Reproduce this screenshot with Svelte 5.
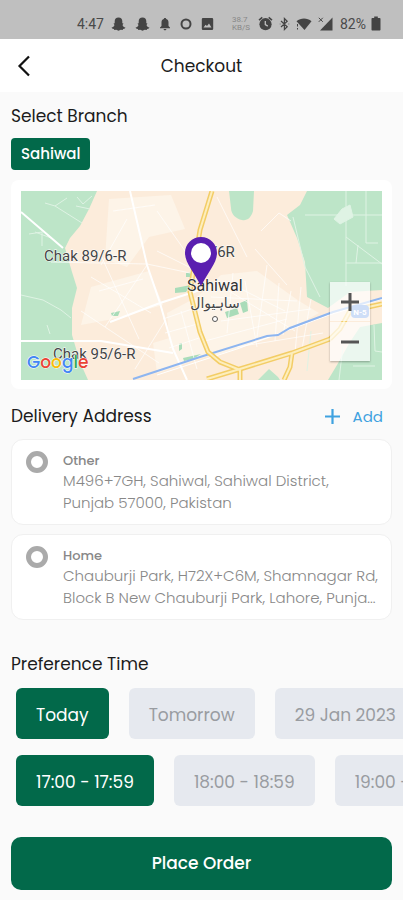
<script lang="ts">
  // Checkout screen: branch, delivery address and preferred time slot.
  interface Address {
    id: string;
    label: string;
    lines: string;
  }

  const addresses: Address[] = [
    {
      id: 'other',
      label: 'Other',
      lines: 'M496+7GH, Sahiwal, Sahiwal District,\nPunjab 57000, Pakistan',
    },
    {
      id: 'home',
      label: 'Home',
      lines: 'Chauburji Park, H72X+C6M, Shamnagar Rd,\nBlock B New Chauburji Park, Lahore, Punja...',
    },
  ];
  const days = ['Today', 'Tomorrow', '29 Jan 2023'];
  const slots = ['17:00 - 17:59', '18:00 - 18:59', '19:00 - 19:59'];

  let address = $state('');
  let day = $state(days[0]);
  let slot = $state(slots[0]);
</script>

<div class="screen">
  <div class="status">
    <span class="clock">4:47</span>
    <span class="icons notices">
      {#each [0, 1] as n (n)}
        <svg width="15" height="14" viewBox="0 0 15 14"><path d="M7.500 .5c2.500 0 3.800 1.700 3.800 3.800v2l1.200.1-1 1.500c.5 1.500 1.500 2.200 2.900 2.700l-.5 1-1.800.4-.4 1-2-.2-2.200 1-2.200-1-2 .2-.4-1-1.800-.4-.5-1c1.400-.5 2.400-1.200 2.900-2.700l-1-1.500 1.200-.1v-2C3.700 2.200 5 .5 7.500.5z" /></svg>
      {/each}
      <svg width="12" height="14" viewBox="0 0 12 14"><path d="M6 1c.8 0 1.200.5 1.200 1.100C8.900 2.700 9.500 4 9.500 5.500V9l1.500 1.500v.8H1v-.8L2.500 9V5.500C2.500 4 3.100 2.700 4.800 2.100 4.800 1.500 5.200 1 6 1zM4.600 12h2.800c0 .8-.6 1.300-1.400 1.300S4.600 12.800 4.600 12z" /></svg>
      <svg width="12" height="14" viewBox="0 0 12 14"><circle cx="6" cy="7" r="4.500" fill="none" stroke="#444" stroke-width="2" /></svg>
      <svg width="13" height="14" viewBox="0 0 13 14"><path fill-rule="evenodd" d="M2 1h9a1.200 1.200 0 0 1 1.200 1.200v9.600A1.200 1.200 0 0 1 11 13H2A1.200 1.200 0 0 1 .8 11.800V2.200A1.200 1.200 0 0 1 2 1zm.5 9.500h8L8 6.500l-2 2.600-1.400-1.400z" /></svg>
    </span>
    <span class="speed"><span>38.7</span><span>KB/S</span></span>
    <span class="icons signals">
      <svg width="15" height="15" viewBox="0 0 15 15"><path d="M.5 3.600 3.800.8l1 1.100-3.300 2.800zM14.500 3.600 11.200.8l-1 1.100 3.300 2.800z" /><circle cx="7.500" cy="8.200" r="6.100" /><path d="M7.300 5v3.600l2.500 1.500" fill="none" stroke="#bfbfbf" stroke-width="1.300" /></svg>
      <svg width="11" height="14" viewBox="0 0 11 14"><path d="m2 4 6.200 5.800L5.400 12.500v-11L8.200 4.200 2 10M.8 7h.6M9.500 7h.7" fill="none" stroke="#444" stroke-width="1.200" /></svg>
      <svg width="16" height="14" viewBox="0 0 16 14"><path d="M.5 4.200C4.800.6 11.200.6 15.500 4.200L8.500 13z" /><path d="M1.500 7v2.500M1.500 11v1.500" stroke="#444" stroke-width="1" /></svg>
      <svg width="15" height="14" viewBox="0 0 15 14"><path d="M14.500 .5V13.500H2z" /><path d="m.8.8 4 4m0-4-4 4" stroke="#444" stroke-width="1" /></svg>
    </span>
    <span class="clock">82%</span>
    <svg width="10" height="15" viewBox="0 0 10 15"><path d="M3.200 .5h3.600v1.500h1.700c.6 0 1 .4 1 1v10.500c0 .6-.4 1-1 1h-7c-.6 0-1-.4-1-1V3c0-.6.4-1 1-1h1.700z" /></svg>
  </div>

  <header class="bar">
    <button class="back" aria-label="Back">
      <svg width="14" height="22" viewBox="0 0 14 22"><path d="M12 1.500 2.500 11 12 20.500" fill="none" stroke="#111" stroke-width="2.200" /></svg>
    </button>
    <h1>Checkout</h1>
  </header>

  <main>
    <h2>Select Branch</h2>
    <button class="branch" aria-pressed="true">Sahiwal</button>

    <section class="map-card" aria-label="Branch location">
      <div class="map">
        <svg class="canvas" viewBox="0 0 361 189">
          <rect width="361" height="189" fill="#fcecdb" />
          <!-- built-up area -->
          <path d="M88 8l62-4 14 34-36 8-22 30-22-8zM70 96l58-16 14 34-50 14-32 6zM146 122l30-16 24-22 36-4 42 30 20 12-40 22-62 20-46 6zM132 152l46-14 18 24-60 20z" fill="#fdf4e8" />
          <g fill="#bde5c8">
            <path d="M0 0h76l-8 18-9 17-10 12-5 10 7 24 5 16-5 20v27l8 27 8 18H0z" />
            <path d="M286 0h75v99l-32 2-22 16-21-11-2-35-8-24-10-23 13-10z" />
            <path d="M361 132l-22 4-10 15-13 23-9 15h54z" />
            <path d="M208 0h25l-1 20c-2 7-6 10-11 9-6-1-11-6-11-12z" />
            <path d="M239 187l9-9 9 8 2 3h-22z" />
          </g>
          <g fill="#a9dcb9">
            <path d="M204 121l12-4 2 6-12 4zM219 112l7-3 1 11-5 2zM154 97l16-3-5 7-11 1zM165 82l10-1-3 5h-7zM90 122l9-2-2 5h-6zM158 153l3-1v6l-3 2zM162 167l18-4-8 5-9 2z" />
          </g>
          <g fill="none" stroke="#dff3e4" stroke-width="1">
            <path d="M24 12l10 3 27 17M34 15l12-8M0 104l22 5 18 10 10 8M8 43l13-2v14M26 134l3 9M56 6l6 7 9-8M55 15l14 3M14 41l16 6M284 24h77M325 0v95M325 46l36 27M325 72h36M335 72l2-18M345 0v52h12M272 26l12 50 15 30M353 134l1 26 7 1M322 155l-4 34M332 175h22M290 140l-4 40" />
            <path d="M313 28l8-10 8-4 3 12-13 7z" fill="#dff3e4" />
          </g>
          <g fill="none" stroke="#fff" stroke-width="1" stroke-opacity="0.7">
            <path d="M30 71l96 2 48 10M70 86l60 36M78 60l40 88M92 20l42-6M78 100l44-12M80 74l26-46M60 120l78 52M136 60l44 22M142 128l35-12M144 142l36-10M148 157l33-11M126 74l-42 62M196 6l30 60M204 90l60 30M212 82l-6 60M224 90l12 66M246 74l-10 72M258 92l-4 58M270 100l-8 44M190 106l86 4M184 150l82-22M208 100l66 40M240 40l18-18 12 8M234 58l32 36M136 20l28 40M114 178l30-48M160 120l16 58" />
            <path d="M200 130l90-12M216 156l86-14M280 96l-6 66M290 108l-9 50" />
          </g>
          <g fill="none" stroke="#fff" stroke-width="2">
            <path d="M0 21l42 36M109 0l17 74 13 38 13 46 14 31M0 102M0 150h80l72 12M89 131l50-19 40-13" />
          </g>
          <path d="M136 184l80-26 92-34 53-16" fill="none" stroke="#fff" stroke-width="1" />
          <path d="M112 188l67-22 67-21 11-1 12-7 43-16 49-14" fill="none" stroke="#8db5f0" stroke-width="2" />
          <g fill="none" stroke="#f3cd66" stroke-width="5">
            <path d="M191 0l-12 39-10 62 10 40 8 20 12 10 20 8v10M186 188l33-10 52-16 38-14M309 148l10-10 10-18 32-7M271 162l-2 14-6 13" />
          </g>
          <g fill="none" stroke="#fdeebd" stroke-width="2">
            <path d="M191 0l-12 39-10 62 10 40 8 20 12 10 20 8v10M186 188l33-10 52-16 38-14M309 148l10-10 10-18 32-7M271 162l-2 14-6 13" />
          </g>
          <rect x="330" y="114" width="18" height="13" rx="4" fill="#5b8fe4" />
          <text class="shield" x="339" y="124">N-5</text>
          <g class="place">
            <text x="23" y="70">Chak 89/6-R</text>
            <text x="32" y="168">Chak 95/6-R</text>
            <text x="190" y="66">/6R</text>
            <text x="166" y="100" class="town">Sahiwal</text>
            <text x="194" y="117" class="urdu">ساہیوال</text>
          </g>
          <circle cx="194" cy="128" r="2.500" fill="#fff" stroke="#555" stroke-width="1" />
          <path fill="#5a1fb0" d="M180 46c9 0 16 7 16 16 0 10-9 19-16 33-7-14-16-23-16-33 0-9 7-16 16-16z" />
          <circle cx="180" cy="62" r="10" fill="#fff" />
          <text class="google" x="6" y="177"><tspan fill="#4285f4">G</tspan><tspan fill="#ea4335">o</tspan><tspan fill="#fbbc05">o</tspan><tspan fill="#4285f4">g</tspan><tspan fill="#34a853">l</tspan><tspan fill="#ea4335">e</tspan></text>
        </svg>
        <div class="zoom">
          <button aria-label="Zoom in">
            <svg width="18" height="18" viewBox="0 0 18 18"><path d="M9 0v18M0 9h18" stroke="#555" stroke-width="3" /></svg>
          </button>
          <button aria-label="Zoom out">
            <svg width="18" height="18" viewBox="0 0 18 18"><path d="M0 9h18" stroke="#555" stroke-width="3" /></svg>
          </button>
        </div>
      </div>
    </section>

    <div class="row">
      <h2>Delivery Address</h2>
      <button class="add">
        <svg width="15" height="15" viewBox="0 0 15 15"><path d="M7.500 0v15M0 7.500h15" stroke="#3fa2e0" stroke-width="2.200" /></svg>
        Add
      </button>
    </div>

    <div class="addresses">
      {#each addresses as item (item.id)}
        <label class="address">
          <input type="radio" name="address" value={item.id} bind:group={address} />
          <span class="details">
            <span class="label">{item.label}</span>
            <span class="lines">{item.lines}</span>
          </span>
        </label>
      {/each}
    </div>

    <h2>Preference Time</h2>
    <div class="chips">
      {#each days as d (d)}
        <button class="chip" class:selected={d === day} aria-pressed={d === day} onclick={() => (day = d)}>{d}</button>
      {/each}
    </div>
    <div class="chips">
      {#each slots as s (s)}
        <button class="chip" class:selected={s === slot} aria-pressed={s === slot} onclick={() => (slot = s)}>{s}</button>
      {/each}
    </div>

    <button class="order">Place Order</button>
  </main>
</div>

<style>
  :global(body) {
    background: #fafafa;
  }
  .screen {
    font-family: Poppins, Inter, sans-serif;
    color: #1c1c1c;
    overflow: hidden;
  }
  button {
    font: inherit;
    color: inherit;
    border: 0;
    padding: 0;
    background: none;
    cursor: pointer;
  }
  svg {
    display: block;
    flex: none;
  }
  .status {
    display: flex;
    align-items: center;
    justify-content: flex-end;
    gap: 5px;
    height: 31px;
    padding: 8px 22px 0 0;
    background: #bfbfbf;
    color: #4a4a4a;
    fill: #444;
  }
  .clock {
    font: 14px/16px Roboto, sans-serif;
  }
  .icons {
    display: flex;
    align-items: center;
  }
  .notices {
    gap: 9px;
    margin: 0 13px 0 2px;
  }
  .signals {
    gap: 6px;
    margin: 0 2px 0 3px;
  }
  .speed {
    display: flex;
    flex-direction: column;
    font: 8px/8px Roboto, sans-serif;
    color: #888;
  }
  .bar {
    display: grid;
    grid-template-columns: 48px 1fr 48px;
    align-items: center;
    height: 53px;
    background: #fff;
  }
  .back {
    display: flex;
    align-items: center;
    height: 100%;
    padding-left: 17px;
  }
  h1,
  h2 {
    margin: 0;
    font-size: 17px;
    font-weight: 400;
    line-height: 24px;
  }
  h1 {
    text-align: center;
  }
  main {
    display: flex;
    flex-direction: column;
    padding: 12px 11px 10px;
  }
  .branch {
    align-self: flex-start;
    margin: 10px 0;
    padding: 0 10px;
    border-radius: 4px;
    background: #02694a;
    color: #fff;
    font-size: 15px;
    font-weight: 500;
    line-height: 32px;
  }
  .map-card {
    padding: 11px 10px 9px;
    border-radius: 8px;
    background: #fff;
  }
  .map {
    position: relative;
  }
  .canvas {
    width: 100%;
    height: auto;
  }
  .place {
    font: 15px Roboto, sans-serif;
    fill: #444;
    stroke: #fff;
    stroke-width: 1px;
    paint-order: stroke;
  }
  .town {
    font-size: 16px;
    fill: #333;
  }
  .urdu {
    font: 14px 'DejaVu Sans', sans-serif;
    text-anchor: middle;
  }
  .shield {
    font: 700 8px Roboto, sans-serif;
    fill: #fff;
    text-anchor: middle;
  }
  .google {
    font: 500 17px Poppins, Lato, sans-serif;
    stroke: #fff;
    stroke-width: 1px;
    paint-order: stroke;
  }
  .zoom {
    position: absolute;
    right: 12px;
    bottom: 19px;
    display: flex;
    flex-direction: column;
    gap: 1px;
    box-shadow: 0 1px 2px rgb(0 0 0 / 0.3);
  }
  .zoom button {
    display: grid;
    place-items: center;
    width: 40px;
    height: 39px;
    background: rgb(255 255 255 / 0.7);
  }
  .row {
    display: flex;
    align-items: center;
    justify-content: space-between;
    margin: 15px 0 11px;
  }
  .add {
    display: flex;
    align-items: center;
    gap: 13px;
    padding-right: 9px;
    color: #3fa2e0;
    font-size: 15px;
  }
  .addresses {
    display: flex;
    flex-direction: column;
    gap: 9px;
    margin-bottom: 32px;
  }
  .address {
    display: flex;
    gap: 15px;
    padding: 11px 0 10px 14px;
    border: 1px solid #f0f0f0;
    border-radius: 12px;
    background: #fff;
    cursor: pointer;
  }
  .address input {
    appearance: none;
    flex: none;
    width: 22px;
    height: 22px;
    margin: 0;
    border: 5px solid #aaa;
    border-radius: 50%;
  }
  .address input:checked {
    border-color: #02694a;
  }
  .details {
    display: flex;
    flex-direction: column;
  }
  .label {
    color: #888;
    font-size: 13px;
    font-weight: 500;
    line-height: 19px;
  }
  .lines {
    color: #888;
    font-size: 15px;
    font-weight: 300;
    line-height: 22px;
    white-space: pre;
  }
  .chips {
    display: flex;
    gap: 20px;
    margin: 12px -11px 4px 5px;
    overflow: hidden;
  }
  .chip {
    flex: none;
    padding: 3px 20px 0;
    border-radius: 6px;
    background: #e6e9ef;
    color: #999ca1;
    font-size: 17px;
    line-height: 48px;
  }
  .selected {
    background: #02694a;
    color: #fff;
  }
  .order {
    margin-top: 27px;
    border-radius: 10px;
    background: #02694a;
    color: #fff;
    font-size: 17px;
    font-weight: 500;
    line-height: 53px;
  }
</style>
